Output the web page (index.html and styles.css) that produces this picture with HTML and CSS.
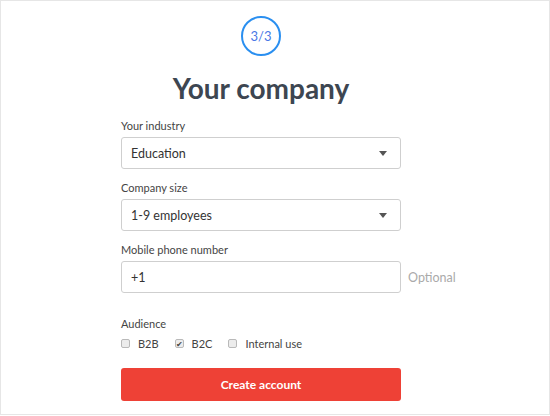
FILE: index.html
```html
<!DOCTYPE html>
<html lang="en">
<head>
<meta charset="utf-8">
<title>Your company</title>
<link rel="stylesheet" href="styles.css">
</head>
<body>
<div class="frame">
  <main class="column">
    <div class="step">3/3</div>
    <h1 class="title">Your company</h1>

    <div class="field">
      <div class="label">Your industry</div>
      <div class="select">
        <span class="value">Education</span>
        <span class="caret"></span>
      </div>
    </div>

    <div class="field">
      <div class="label">Company size</div>
      <div class="select">
        <span class="value">1-9 employees</span>
        <span class="caret"></span>
      </div>
    </div>

    <div class="field">
      <div class="label">Mobile phone number</div>
      <div class="input-row">
        <div class="input"><span class="value">+1</span></div>
        <span class="hint">Optional</span>
      </div>
    </div>

    <div class="field audience">
      <div class="label">Audience</div>
      <div class="checks">
        <label class="check"><span class="box"></span><span>B2B</span></label>
        <label class="check"><span class="box checked">&#10004;</span><span>B2C</span></label>
        <label class="check"><span class="box"></span><span>Internal use</span></label>
      </div>
    </div>

    <button class="submit">Create account</button>
  </main>
</div>
</body>
</html>
```

FILE: styles.css
```css
html, body {
  margin: 0;
  padding: 0;
  background: #fff;
}
body {
  font-family: "Lato", "Open Sans", sans-serif;
  color: #3d4651;
}
.frame {
  box-sizing: border-box;
  width: 550px;
  height: 415px;
  border: 1px solid #e6e6e6;
  padding-top: 15px;
}
.column {
  width: 280px;
  margin-left: 120px;
  display: flex;
  flex-direction: column;
}
.step {
  box-sizing: border-box;
  width: 40px;
  height: 40px;
  border: 2px solid #2a8ff0;
  border-radius: 50%;
  align-self: center;
  display: flex;
  align-items: center;
  justify-content: center;
  font-size: 13px;
  color: #4a78e6;
}
.title {
  margin: 15px 0 0;
  font-size: 28px;
  line-height: 34px;
  font-weight: 700;
  text-align: center;
  color: #3d4651;
}
.field {
  margin-top: 14px;
}
.field + .field {
  margin-top: 12px;
}
.label {
  font-size: 11px;
  line-height: 14px;
  color: #444;
  margin-bottom: 4px;
}
.select, .input {
  box-sizing: border-box;
  height: 32px;
  border: 1px solid #cfcfcf;
  border-radius: 3px;
  display: flex;
  align-items: center;
  justify-content: space-between;
  padding: 0 13px 0 9px;
  font-size: 12.5px;
  color: #333;
}
.caret {
  width: 0;
  height: 0;
  border-left: 4px solid transparent;
  border-right: 4px solid transparent;
  border-top: 5px solid #555;
}
.input-row {
  display: flex;
  align-items: center;
}
.input {
  flex: 0 0 280px;
}
.hint {
  margin-left: 7px;
  font-size: 12.5px;
  color: #aaa;
  white-space: nowrap;
}
.field.audience {
  margin-top: 24px;
}
.checks {
  display: flex;
  align-items: center;
  margin-top: 6px;
  font-size: 11px;
  color: #444;
}
.check {
  display: flex;
  align-items: center;
  margin-right: 16px;
}
.box {
  box-sizing: border-box;
  width: 9px;
  height: 9px;
  border: 1px solid #b9b9b9;
  border-radius: 2px;
  background: #ececec;
  margin-right: 8px;
  display: flex;
  align-items: center;
  justify-content: center;
  font-size: 8px;
  line-height: 1;
  color: #444;
}
.submit {
  margin-top: 18px;
  height: 33px;
  border: none;
  border-radius: 3px;
  background: #ee4136;
  color: #fff;
  font-family: inherit;
  font-size: 12px;
  font-weight: 700;
  padding: 0;
}
```
